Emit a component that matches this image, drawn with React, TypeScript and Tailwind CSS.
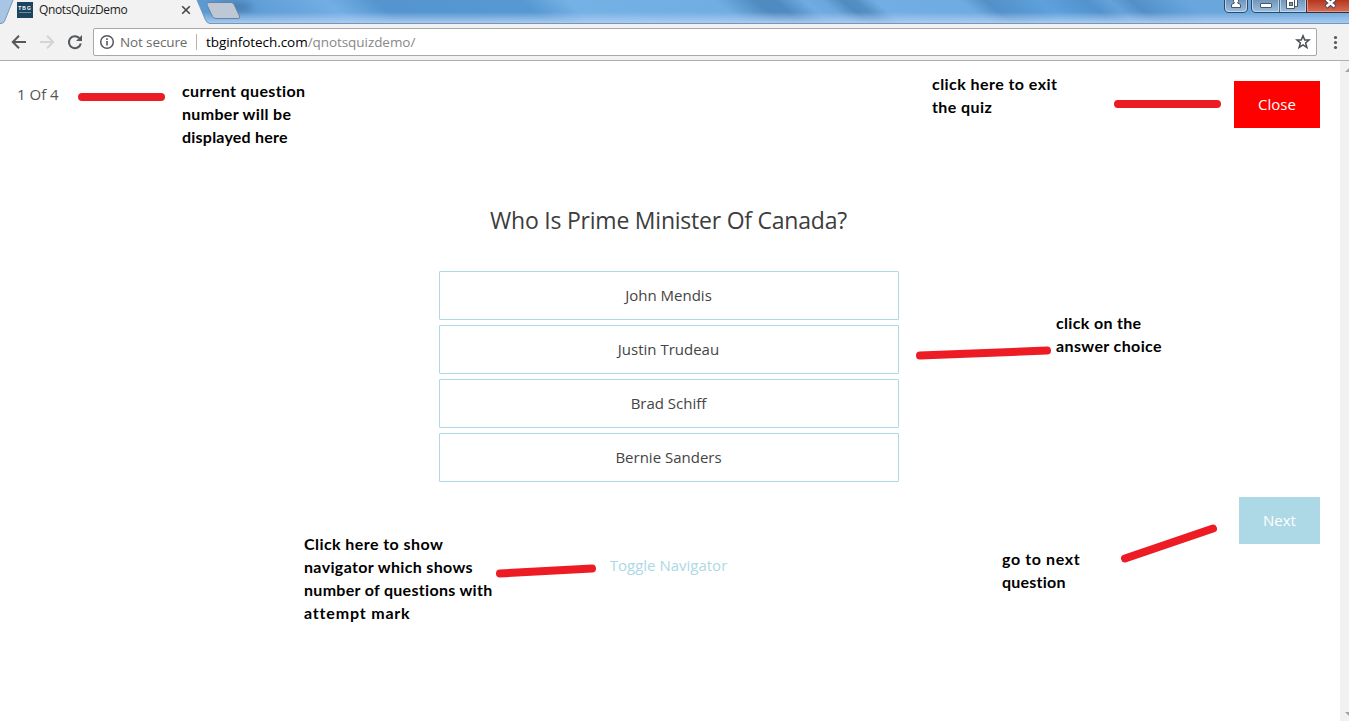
import React from "react";

const answers = ["John Mendis", "Justin Trudeau", "Brad Schiff", "Bernie Sanders"];

const glassStops: [number, string][] = [
  [-40, "#5b98cf"],
  [225, "#5c9ad3"],
  [300, "#6ba8df"],
  [325, "#73afe4"],
  [375, "#5495cf"],
  [520, "#5698d2"],
  [565, "#74b1e4"],
  [715, "#70ade1"],
  [755, "#4f8bc0"],
  [775, "#4f8bc0"],
  [803, "#70abe1"],
  [822, "#6ca6dc"],
  [842, "#4f8bc0"],
  [855, "#5590c5"],
  [874, "#72aee3"],
  [960, "#6eabe0"],
  [985, "#5290c8"],
  [1040, "#5ea1dd"],
  [1085, "#5292cd"],
  [1108, "#65a2d9"],
  [1130, "#5390c9"],
  [1185, "#68a6dd"],
  [1240, "#69a7dc"],
  [1349, "#6baada"],
];

function Glass() {
  return (
    <svg className="absolute inset-0" width="1349" height="24" aria-hidden="true">
      <defs>
        <linearGradient id="streaks" gradientUnits="userSpaceOnUse" x1="-40" y1="0" x2="1349" y2="0">
          {glassStops.map(([x, color]) => (
            <stop key={x} offset={(x + 40) / 1389} stopColor={color} />
          ))}
        </linearGradient>
        <linearGradient id="fade" x1="0" y1="0" x2="0" y2="1">
          <stop offset="0.5" stopColor="#b0cef2" stopOpacity="0" />
          <stop offset="0.75" stopColor="#b0cef2" stopOpacity="0.5" />
          <stop offset="0.95" stopColor="#b0cef2" stopOpacity="0.9" />
        </linearGradient>
        <linearGradient id="red" x1="0" y1="0" x2="0" y2="1">
          <stop offset="0" stopColor="#b8351d" />
          <stop offset="1" stopColor="#d3715c" />
        </linearGradient>
        <linearGradient id="caption" x1="0" y1="0" x2="0" y2="1">
          <stop offset="0" stopColor="#7097bb" />
          <stop offset="1" stopColor="#9dbfe1" />
        </linearGradient>
        <filter id="soft" x="-30%" y="-60%" width="160%" height="220%">
          <feGaussianBlur stdDeviation="4" />
        </filter>
      </defs>
      <rect x="-40" width="1389" height="24" fill="url(#streaks)" transform="skewX(50)" />
      <ellipse cx="233" cy="7" rx="20" ry="5" fill="#36648f" opacity="0.6" filter="url(#soft)" />
      <rect width="1349" height="24" fill="url(#fade)" />
      <path d="M0 0H14L4 23H0Z" fill="#a9c5e4" />
      <path d="M0 23.5H1.500Q4 23 5 20L13 0H197L205.500 20Q207 23.500 210 23.500H1349V24H0Z" fill="#f2f2f2" />
      <path d="M0 23.500H1Q4 23.500 5 20L13 0M197 0L205.500 20Q207 23.500 210 23.500H1349" fill="none" stroke="#7896b9" />
      <path d="M209 2.500H231Q233 2.500 234 4.500L239.500 16Q240.500 18.500 238 18.500H216Q213.500 18.500 212.500 16.500L207 5Q206 2.500 209 2.500Z" fill="#bdc8d4" stroke="#6685a6" />
      <path d="M1224.500 0V8Q1224.500 12.500 1229 12.500H1243Q1247.500 12.500 1247.500 8V0" fill="url(#caption)" stroke="#2f4763" />
      <path d="M1225.500 0V8Q1225.500 11.500 1229 11.500H1243Q1246.500 11.500 1246.500 8V0" fill="none" stroke="#d2e3f3" strokeOpacity="0.75" />
      <path d="M1251.500 0V8Q1251.500 12.500 1256 12.500H1306.500V0" fill="url(#caption)" stroke="#2f4763" />
      <path d="M1306.500 0H1349V12.500H1306.500Z" fill="url(#red)" />
      <path d="M1306.500 0V12.500H1349" fill="none" stroke="#4c2530" />
      <path d="M1307.500 0V11.500H1349" fill="none" stroke="#e7a594" strokeOpacity="0.8" />
      <path d="M1252.500 0V8Q1252.500 11.500 1256 11.500H1278.500V0M1280.500 0V11.500H1305.500V0" fill="none" stroke="#d2e3f3" strokeOpacity="0.7" />
      <path d="M1279.500 0V12" stroke="#4e6b8b" />
      <path d="M1233.500 -1V1.500L1234.500 3L1231.500 4.500V7.500H1240.500V4.500L1237.500 3L1238.500 1.500V-1Z" fill="#fff" stroke="#4b5464" />
      <rect x="1260.500" y="3.500" width="11" height="4" rx="0.5" fill="#fff" stroke="#4b5464" />
      <path d="M1289.500 0V-1H1297.500V6.500H1294" fill="#fff" stroke="#4b5464" />
      <path d="M1286.500 -1H1294.500V8.500H1286.500Z" fill="#fff" stroke="#4b5464" />
      <rect x="1289.500" y="2.500" width="3" height="3" fill="#7ea1c4" stroke="#4b5464" />
      <path d="M1326 -1L1335 7M1335 -1L1326 7" stroke="#4b4453" strokeWidth="4.500" />
      <path d="M1326.500 -0.500L1334.500 6.500M1334.500 -0.500L1326.500 6.500" stroke="#fff" strokeWidth="2.500" />
    </svg>
  );
}

function TabStrip() {
  return (
    <div className="relative h-6 shrink-0 overflow-hidden">
      <Glass />
      <div className="relative flex h-5 items-center pl-[17px]">
        <div className="flex h-4 w-4 flex-col items-center bg-[#1b4460] pt-[3px]">
          <span className="font-['Liberation_Sans',sans-serif] text-[5px] leading-[6px] font-bold tracking-[1px] text-white">TBG</span>
          <span className="mt-px h-px w-3 bg-[#6f8d9f]" />
        </div>
        <span className="ml-[6px] w-[142px] text-[12px] leading-5 tracking-[-0.36px] text-[#222]">QnotsQuizDemo</span>
        <svg width="10" height="10" viewBox="0 0 10 10" aria-hidden="true">
          <path d="M1.200 1.200L8.800 8.800M8.800 1.200L1.200 8.800" stroke="#444" strokeWidth="1.600" />
        </svg>
      </div>
    </div>
  );
}

function Toolbar() {
  return (
    <div className="flex h-[37px] shrink-0 items-start border-b border-[#aeaeae] bg-[#f2f2f2] pt-1 pl-[11px]">
      <svg className="mt-[6px] shrink-0" width="82" height="16" viewBox="0 0 82 16" fill="none" aria-hidden="true">
        <path d="M15 8H2.500M8 1.800L1.800 8L8 14.200" stroke="#55585d" strokeWidth="2" />
        <path d="M29 8H41.500M36 1.800L42.200 8L36 14.200" stroke="#d3d4d5" strokeWidth="2" />
        <path d="M68.300 4A6 6 0 1 0 69.800 9.500" stroke="#55585d" strokeWidth="2" />
        <path d="M71 1V7H65Z" fill="#55585d" />
      </svg>
      <div className="flex h-7 w-[1224px] shrink-0 items-center rounded-[2px] border border-[#a8a8a8] bg-white pr-[5px] pl-[5px] text-[13.5px]">
        <svg width="16" height="16" viewBox="0 0 16 16" fill="none" aria-hidden="true">
          <circle cx="8" cy="8" r="6.300" stroke="#55585d" strokeWidth="1.500" />
          <path d="M8 7V11.500M8 4.300V6" stroke="#55585d" strokeWidth="1.600" />
        </svg>
        <span className="ml-[5px] w-[76px] pt-px tracking-[-0.12px] whitespace-nowrap text-[#6b6b6b]">Not secure</span>
        <span className="h-4 w-px bg-[#b4b4b4]" />
        <span className="ml-[9px] grow pt-px tracking-[-0.06px] whitespace-nowrap text-[#888]">
          <span className="text-black">tbginfotech.com</span>/qnotsquizdemo/
        </span>
        <svg width="16" height="16" viewBox="0 0 16 16" fill="none" aria-hidden="true">
          <path d="M8 1.800L9.700 6H14L10.600 8.900L11.900 13.500L8 10.900L4.100 13.500L5.400 8.900L2 6H6.300Z" stroke="#4a4d52" strokeWidth="1.500" />
        </svg>
      </div>
      <svg className="mt-[6px] ml-[16px]" width="5" height="16" viewBox="0 0 5 16" fill="#55585d" aria-hidden="true">
        <circle cx="2.500" cy="3.500" r="1.600" />
        <circle cx="2.500" cy="8.500" r="1.600" />
        <circle cx="2.500" cy="13.500" r="1.600" />
      </svg>
    </div>
  );
}

function Note({ className, lines }: { className: string; lines: [string, string][] }) {
  return (
    <div className={`absolute flex flex-col font-[Lato,sans-serif] text-[16px] leading-[23px] font-bold whitespace-nowrap text-black [font-variant-ligatures:none] ${className}`}>
      {lines.map(([text, tracking]) => (
        <span key={text} className={tracking}>{text}</span>
      ))}
    </div>
  );
}

function Annotations() {
  return (
    <>
      <svg className="pointer-events-none absolute inset-0" width="1349" height="721" fill="none" stroke="#ed1c24" strokeWidth="8" strokeLinecap="round" aria-hidden="true">
        <path d="M82 97H161" />
        <path d="M1118 104H1217" />
        <path d="M920 355.500L1047 350.500" />
        <path d="M500 573.500L592 568.500" />
        <path d="M1125 558.500L1213 528.500" />
      </svg>
      <Note className="top-[79px] left-[182px]" lines={[["current question", "tracking-[0.36px]"], ["number will be", "tracking-[0.33px]"], ["displayed here", "tracking-[0.22px]"]]} />
      <Note className="top-[72px] left-[932px]" lines={[["click here to exit", "tracking-[0.44px]"], ["the quiz", "tracking-[0.4px]"]]} />
      <Note className="top-[311px] left-[1056px]" lines={[["click on the", "tracking-[0.33px]"], ["answer choice", "tracking-[0.38px]"]]} />
      <Note className="top-[532px] left-[304px]" lines={[["Click here to show", "tracking-[0.43px]"], ["navigator which shows", "tracking-[0.35px]"], ["number of questions with", "tracking-[0.3px]"], ["attempt mark", "tracking-[0.82px]"]]} />
      <Note className="top-[547px] left-[1002px]" lines={[["go to next", "tracking-[0.62px]"], ["question", "tracking-[0.22px]"]]} />
    </>
  );
}

export default function App() {
  return (
    <div className="relative flex h-[721px] w-[1349px] flex-col overflow-hidden bg-white font-['Open_Sans',sans-serif]">
      <TabStrip />
      <Toolbar />
      <div className="flex grow">
        <main className="flex w-[1340px] flex-col pt-5 pr-5 pl-[17px] text-[15px] text-[#444]">
          <header className="flex h-[47px] items-start justify-between">
            <span className="pt-[2px] leading-[22px] text-[#555]">1 Of 4</span>
            <button className="h-[47px] w-[86px] bg-[#ff0000] text-white">Close</button>
          </header>
          <h1 className="mt-[76px] text-center text-[23px] leading-8 tracking-[-0.23px] text-[#3d3d3d]">Who Is Prime Minister Of Canada?</h1>
          <div className="mt-[35px] ml-px flex flex-col gap-[5px] self-center">
            {answers.map((answer) => (
              <button key={answer} className="h-[49px] w-[460px] rounded-[1px] border border-[#add8e6] pr-px">{answer}</button>
            ))}
          </div>
          <button className="mt-[15px] h-[47px] w-[81px] self-end bg-[#add8e6] text-white">Next</button>
          <button className="mt-[10px] self-center leading-[23px] text-[#add8e6]">Toggle Navigator</button>
        </main>
        <div className="flex w-[9px] flex-col items-end justify-between bg-[#f1f1f1] pt-[7px] pb-[5px]">
          <svg width="4" height="4" viewBox="0 0 4 4" fill="#a3a3a3" aria-hidden="true"><path d="M0 4L4 0V4Z" /></svg>
          <svg width="4" height="4" viewBox="0 0 4 4" fill="#a3a3a3" aria-hidden="true"><path d="M0 0H4V4Z" /></svg>
        </div>
      </div>
      <Annotations />
    </div>
  );
}
